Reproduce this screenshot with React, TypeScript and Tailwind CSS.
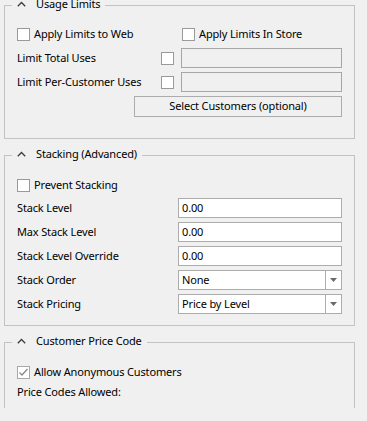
import type { ReactNode } from "react";

function Chevron() {
  return (
    <svg width="9" height="6" viewBox="0 0 9 6" className="mt-[4px] shrink-0">
      <polyline
        points="0.8,5.2 4.5,1.5 8.2,5.2"
        fill="none"
        stroke="#3c3c3c"
        strokeWidth="1.3"
      />
    </svg>
  );
}

function Group({
  title,
  children,
  className,
}: {
  title: string;
  children: ReactNode;
  className: string;
}) {
  return (
    <fieldset
      className={`ml-[4px] w-[351px] border border-[#c3c3c3] px-[12px] ${className}`}
    >
      <legend className="ml-[-5px] flex h-[17px] items-start gap-[10px] px-[5px]">
        <Chevron />
        <span className="leading-[13px]">{title}</span>
      </legend>
      {children}
    </fieldset>
  );
}

function Check({ label, checked = false }: { label: string; checked?: boolean }) {
  return (
    <label className="flex h-[20px] items-center gap-[4px]">
      <span
        className={`flex h-[13px] w-[13px] items-center justify-center border ${
          checked ? "border-[#a8a8a8] bg-white" : "border-[#9a9a9a] bg-white"
        }`}
      >
        {checked && (
          <svg width="11" height="11" viewBox="0 0 11 11">
            <polyline
              points="1.5,5.5 4,8 9.5,2"
              fill="none"
              stroke="#8a8a8a"
              strokeWidth="1.4"
            />
          </svg>
        )}
      </span>
      <span>{label}</span>
    </label>
  );
}

function TextBox({ value }: { value: string }) {
  return (
    <div className="flex h-[20px] w-[164px] items-center border border-[#acacac] bg-white pl-[3px]">
      {value}
    </div>
  );
}

function Select({ value }: { value: string }) {
  return (
    <div className="flex h-[20px] w-[164px] border border-[#acacac] bg-white">
      <div className="flex flex-1 items-center pl-[3px]">{value}</div>
      <div className="flex w-[16px] items-center justify-center border-l border-[#acacac]">
        <svg width="7" height="4" viewBox="0 0 7 4">
          <polygon points="0,0 7,0 3.5,4" fill="#6a6a6a" />
        </svg>
      </div>
    </div>
  );
}

function FieldRow({ label, children }: { label: string; children: ReactNode }) {
  return (
    <div className="flex h-[20px] items-center">
      <span className="flex-1">{label}</span>
      {children}
    </div>
  );
}

function LimitRow({ label }: { label: string }) {
  return (
    <div className="flex h-[20px] items-center">
      <span className="flex-1">{label}</span>
      <span className="h-[13px] w-[13px] border border-[#9a9a9a] bg-white" />
      <div className="ml-[7px] h-[20px] w-[161px] border border-[#a6a6a6] bg-[#f0f0f0]" />
    </div>
  );
}

export default function App() {
  return (
    <div className="h-[421px] w-[367px] overflow-hidden bg-[#f0f0f0] text-[11px] tracking-[-0.15px] text-black [font-family:'Noto_Sans',sans-serif]">
      <Group title="Usage Limits" className="-mt-[3px] pb-[21px] pt-[10px]">
        <div className="flex flex-col gap-[4px]">
          <div className="flex">
            <div className="w-[165px]">
              <Check label="Apply Limits to Web" />
            </div>
            <Check label="Apply Limits In Store" />
          </div>
          <LimitRow label="Limit Total Uses" />
          <LimitRow label="Limit Per-Customer Uses" />
          <div className="flex justify-end">
            <button className="h-[21px] w-[208px] border border-[#acacac] bg-[#f0f0f0] text-[11px]">
              Select Customers (optional)
            </button>
          </div>
        </div>
      </Group>

      <Group title="Stacking (Advanced)" className="mt-[8px] pb-[11px] pt-[11px]">
        <Check label="Prevent Stacking" />
        <div className="mt-[3px] flex flex-col gap-[4px]">
          <FieldRow label="Stack Level">
            <TextBox value="0.00" />
          </FieldRow>
          <FieldRow label="Max Stack Level">
            <TextBox value="0.00" />
          </FieldRow>
          <FieldRow label="Stack Level Override">
            <TextBox value="0.00" />
          </FieldRow>
          <FieldRow label="Stack Order">
            <Select value="None" />
          </FieldRow>
          <FieldRow label="Stack Pricing">
            <Select value="Price by Level" />
          </FieldRow>
        </div>
      </Group>

      <Group title="Customer Price Code" className="mt-[8px] border-b-0 pb-[6px] pt-[11px]">
        <Check label="Allow Anonymous Customers" checked />
        <div className="flex h-[20px] items-center">Price Codes Allowed:</div>
      </Group>
    </div>
  );
}
